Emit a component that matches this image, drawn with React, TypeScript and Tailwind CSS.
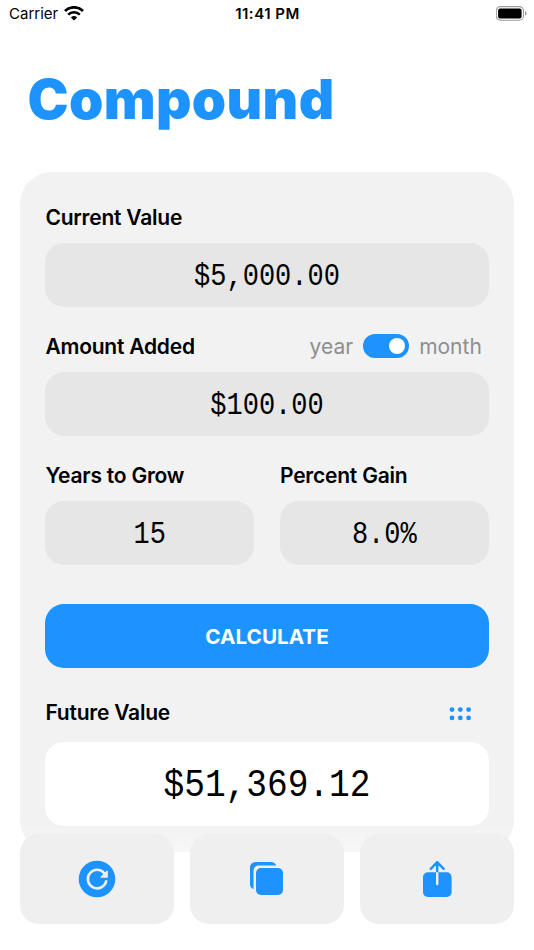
import type { ReactNode } from 'react'

function WifiIcon() {
  return (
    <svg width="20" height="15" viewBox="0 0 20 15" fill="none" stroke="black">
      <path d="M1 5a13 13 0 0 1 18 0" strokeWidth="2.9" />
      <path d="M4.2 8.6a8.3 8.3 0 0 1 11.6 0" strokeWidth="2.6" />
      <path d="M10 14.4 6.9 11.4a4.7 4.7 0 0 1 6.2 0Z" fill="black" stroke="none" />
    </svg>
  )
}

function BatteryIcon() {
  return (
    <svg width="32" height="15" viewBox="0 0 32 15" fill="none">
      <rect x="0.3" y="0.6" width="27.2" height="13.6" rx="4.2" stroke="#9b9b9b" strokeWidth="1.1" />
      <rect x="2.1" y="2.4" width="23.5" height="10" rx="2" fill="black" />
      <path d="M29 5.2c2.2.9 2.2 3.5 0 4.4Z" fill="#9b9b9b" />
    </svg>
  )
}

function ResetIcon() {
  return (
    <svg width="38" height="38" viewBox="0 0 38 38" fill="none">
      <circle cx="19" cy="19" r="18.3" fill="#1c93ff" />
      <path d="M28.2 21.3A9.3 9.3 0 1 1 26.4 13.2" stroke="#efefef" strokeWidth="2.6" strokeLinecap="round" />
      <path d="M29.2 11.2v5.9h-6.2Z" fill="#efefef" stroke="#efefef" strokeWidth="1.2" strokeLinejoin="round" />
    </svg>
  )
}

function CopyIcon() {
  return (
    <svg width="36" height="36" viewBox="0 0 36 36" fill="#1c93ff">
      <path d="M1 6.5A5.5 5.5 0 0 1 6.5 1H22a5.5 5.5 0 0 1 5.2 3.5H9.5a5 5 0 0 0-5 5V28A5.5 5.5 0 0 1 1 22.8Z" />
      <rect x="7" y="7" width="27" height="27" rx="5" />
    </svg>
  )
}

function ShareIcon() {
  return (
    <svg width="32" height="38" viewBox="0 0 32 38" fill="none">
      <rect x="2" y="12.3" width="28.6" height="24.7" rx="4.8" fill="#1c93ff" />
      <path d="M16.2 12V2.2M9.7 8.8l6.5-6.6 6.5 6.6" stroke="#1c93ff" strokeWidth="2.4" strokeLinecap="round" strokeLinejoin="round" />
      <path d="M16.2 13.3V24" stroke="#efefef" strokeWidth="2.4" strokeLinecap="round" />
    </svg>
  )
}

function DotsIcon() {
  return (
    <svg width="24" height="16" viewBox="0 0 24 16" fill="#1c93ff">
      {[4, 12.3, 20.6].map((x) => (
        <g key={x}>
          <circle cx={x} cy="3.6" r="2.4" />
          <circle cx={x} cy="11.9" r="2.4" />
        </g>
      ))}
    </svg>
  )
}

function Label({ children }: { children: ReactNode }) {
  return (
    <span className="text-[21px] leading-[26px] font-semibold tracking-[-0.22px]">
      {children}
    </span>
  )
}

function Field({ value }: { value: string }) {
  return (
    <div className="flex h-16 items-center justify-center rounded-[19px] bg-[#e6e6e6] pt-[4px] font-['Liberation_Mono',monospace] text-[27px]">
      <span className="scale-y-[1.14]">{value}</span>
    </div>
  )
}

const ACTIONS = [
  { label: 'Reset', icon: <ResetIcon /> },
  { label: 'Copy', icon: <CopyIcon /> },
  { label: 'Share', icon: <ShareIcon /> },
]

export default function App() {
  return (
    <div className="relative h-[950px] w-[534px] overflow-hidden bg-white font-['Inter',sans-serif] text-black">
      {/* Status bar */}
      <div className="grid h-7 grid-cols-3 items-center pr-[6px] pl-[9px] text-[15px]">
        <div className="flex items-center gap-[6px]">
          <span>Carrier</span>
          <div className="-mt-[2px]">
            <WifiIcon />
          </div>
        </div>
        <span className="-ml-[2px] text-center font-semibold tracking-[0.5px]">11:41 PM</span>
        <div className="-mt-[2px] flex justify-end">
          <BatteryIcon />
        </div>
      </div>

      <h1 className="mt-[36px] ml-[27.5px] text-[55px] leading-[70px] font-black tracking-[0.35px] text-[#1c93ff]">
        Compound
      </h1>

      {/* Calculator card */}
      <div className="mx-5 mt-[38px] flex h-[680px] flex-col rounded-[32px] bg-[#f2f2f2] px-[25.4px] pt-[33px]">
        <Label>Current Value</Label>
        <div className="mt-[12px]">
          <Field value="$5,000.00" />
        </div>

        <div className="mt-[27px] flex items-center justify-between">
          <Label>Amount Added</Label>
          <div className="flex items-center gap-[10px] pr-[6.8px] text-[21px] leading-[26px] text-[#8e8e8e]">
            <span>year</span>
            <button className="-mt-[2px] flex h-6 w-[46px] items-center justify-end rounded-full bg-[#1c93ff] pr-1">
              <span className="size-4 rounded-full bg-white" />
            </button>
            <span>month</span>
          </div>
        </div>
        <div className="mt-[12px]">
          <Field value="$100.00" />
        </div>

        <div className="mt-[27px] grid grid-cols-2 gap-[26px]">
          <div className="flex flex-col gap-[12px]">
            <Label>Years to Grow</Label>
            <Field value="15" />
          </div>
          <div className="flex flex-col gap-[12px]">
            <Label>Percent Gain</Label>
            <Field value="8.0%" />
          </div>
        </div>

        <button className="mt-[39px] h-16 shrink-0 rounded-[19px] bg-[#1c93ff] pt-[2px] text-[20.7px] font-bold text-white">
          CALCULATE
        </button>

        <div className="mt-[32px] flex items-center justify-between pr-[17px]">
          <Label>Future Value</Label>
          <div className="pt-[2px]">
            <DotsIcon />
          </div>
        </div>
        <div className="mt-[16px] flex h-[84px] shrink-0 items-center justify-center rounded-[19px] bg-white pt-[4px] font-['Liberation_Mono',monospace] text-[34.5px]">
          <span className="scale-y-[1.12]">$51,369.12</span>
        </div>
      </div>

      {/* Bottom actions, laid over the fading end of the card */}
      <div className="absolute inset-x-0 bottom-0 flex h-[126px] gap-4 bg-linear-to-b from-white/0 to-white to-55% px-5 pt-[10px]">
        {ACTIONS.map((action) => (
          <button
            key={action.label}
            aria-label={action.label}
            className="flex h-[90px] flex-1 items-center justify-center rounded-[19px] bg-[#efefef]"
          >
            {action.icon}
          </button>
        ))}
      </div>
    </div>
  )
}
